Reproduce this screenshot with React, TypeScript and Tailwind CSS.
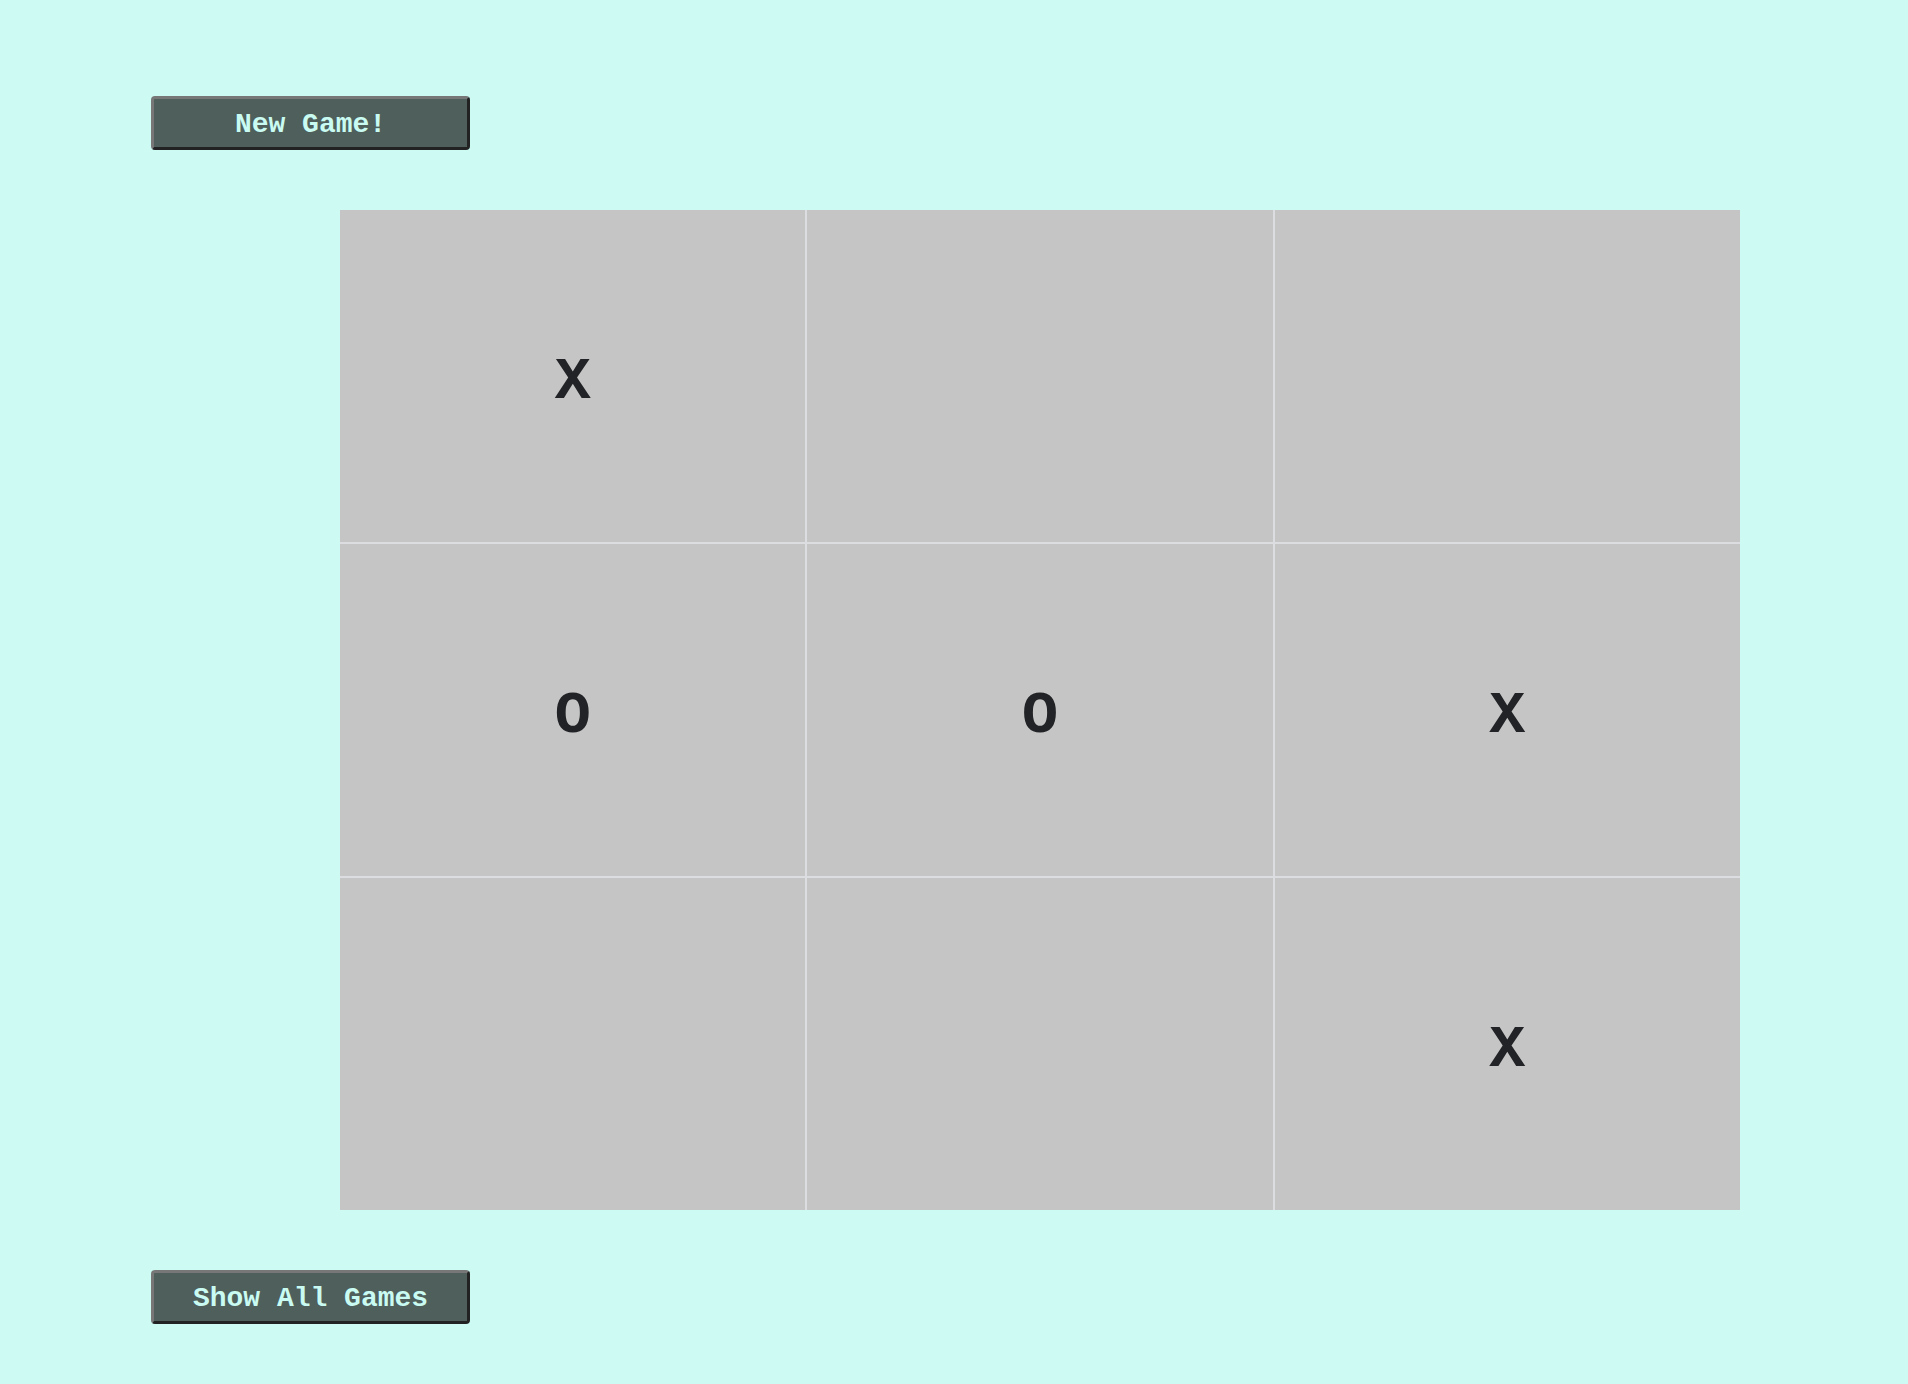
import React, { useState } from 'react';

type Mark = 'X' | 'O' | '';

const initialBoard: Mark[] = ['X', '', '', 'O', 'O', 'X', '', '', 'X'];

const GameButton: React.FC<{ label: string; onClick?: () => void }> = ({ label, onClick }) => (
  <button
    onClick={onClick}
    className="w-[319px] h-[54px] pt-[3px] rounded-[4px] border-[3px] border-t-[#777777] border-l-[#777777] border-b-[#222222] border-r-[#222222] bg-[#4f5f5b] text-[#c9fbf2] text-[28px] font-bold leading-none"
    style={{ fontFamily: '"Liberation Mono", "Courier New", monospace' }}
  >
    {label}
  </button>
);

export default function App() {
  const [board, setBoard] = useState<Mark[]>(initialBoard);

  return (
    <div className="min-h-screen bg-[#cdfbf4] pl-[151px] pt-[96px] pb-[58px]">
      <GameButton label="New Game!" onClick={() => setBoard(Array(9).fill(''))} />

      <div className="mt-[60px] ml-[189px] w-[1400px] h-[1000px] grid grid-cols-3 grid-rows-3 gap-[2px] bg-[#dcdde0]">
        {board.map((cell, i) => (
          <div
            key={i}
            className="bg-[#c4c5c4] flex items-center justify-center pt-[12px] text-[#222326] text-[60px] font-bold"
            style={{ fontFamily: '"Liberation Mono", "Courier New", monospace' }}
          >
            {cell}
          </div>
        ))}
      </div>

      <div className="mt-[60px]">
        <GameButton label="Show All Games" />
      </div>
    </div>
  );
}
